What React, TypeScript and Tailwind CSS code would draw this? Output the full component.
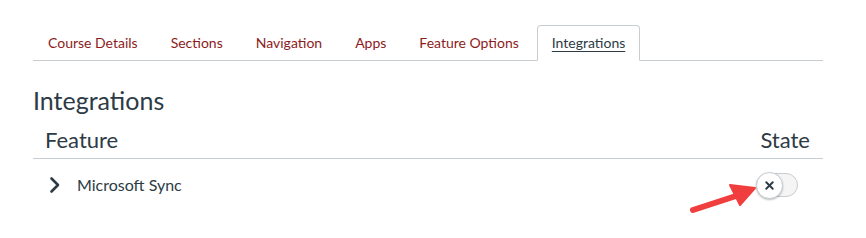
import { X } from 'lucide-react';

const tabs = ['Course Details', 'Sections', 'Navigation', 'Apps', 'Feature Options', 'Integrations'];

export default function App() {
  return (
    <div className="relative w-[866px] h-[238px] bg-white font-['Lato',sans-serif] text-[#2d3b45]">
      {/* tabs */}
      <div className="pt-[25px] pl-[33px] w-[823px]">
        <ul className="flex border-b border-[#c7cdd1]">
          {tabs.map((t) => {
            const active = t === 'Integrations';
            return (
              <li
                key={t}
                className={
                  active
                    ? 'mr-[3px] -mb-px px-[14px] pb-[2px] h-[36px] flex items-center border border-[#c7cdd1] border-b-white rounded-t-[4px] bg-white text-[14px] text-[#2d3b45] underline underline-offset-[3px]'
                    : 'mr-[3px] -mb-px px-[14px] pb-[2px] h-[36px] flex items-center border border-transparent text-[14px] text-[#8b1c1c]'
                }
              >
                {t}
              </li>
            );
          })}
        </ul>
      </div>

      <div className="pl-[33px] w-[823px]">
        <h1 className="mt-[25px] text-[25px] leading-[28px]">Integrations</h1>

        <div className="flex justify-between items-end border-b border-[#c7cdd1] pl-[12px] pr-[13px] mt-[13px] pb-[5px]">
          <span className="text-[22px] leading-[26px]">Feature</span>
          <span className="text-[22px] leading-[26px]">State</span>
        </div>

        <div className="flex items-center justify-between h-[52px] pl-[16px] pr-[25px]">
          <div className="flex items-center">
            <svg width="12" height="18" viewBox="0 0 12 18" className="shrink-0">
              <path d="M2.5 2.5 L9 9 L2.5 15.5" fill="none" stroke="#2d3b45" strokeWidth="2.6" strokeLinecap="round" strokeLinejoin="round" />
            </svg>
            <span className="ml-[16px] text-[16px]">Microsoft Sync</span>
          </div>
          <div className="relative w-[42px] h-[24px] rounded-full bg-[#f5f5f5] border border-[#c7cdd1]">
            <div className="absolute -left-[1px] -top-[2px] w-[27px] h-[27px] rounded-full bg-white border border-[#c7cdd1] shadow-[0_1px_2px_rgba(0,0,0,0.25)] flex items-center justify-center">
              <X className="w-[13px] h-[13px] text-[#2d3b45]" strokeWidth={3.5} />
            </div>
          </div>
        </div>
      </div>

      {/* annotation arrow */}
      <svg className="absolute left-0 top-0 pointer-events-none" width="866" height="238">
        <line x1="693" y1="210" x2="736" y2="196" stroke="#f03e3e" strokeWidth="6" strokeLinecap="round" />
        <polygon points="755,188 730,185 740,205" fill="#f03e3e" stroke="#f03e3e" strokeWidth="2" strokeLinejoin="round" />
      </svg>
    </div>
  );
}
